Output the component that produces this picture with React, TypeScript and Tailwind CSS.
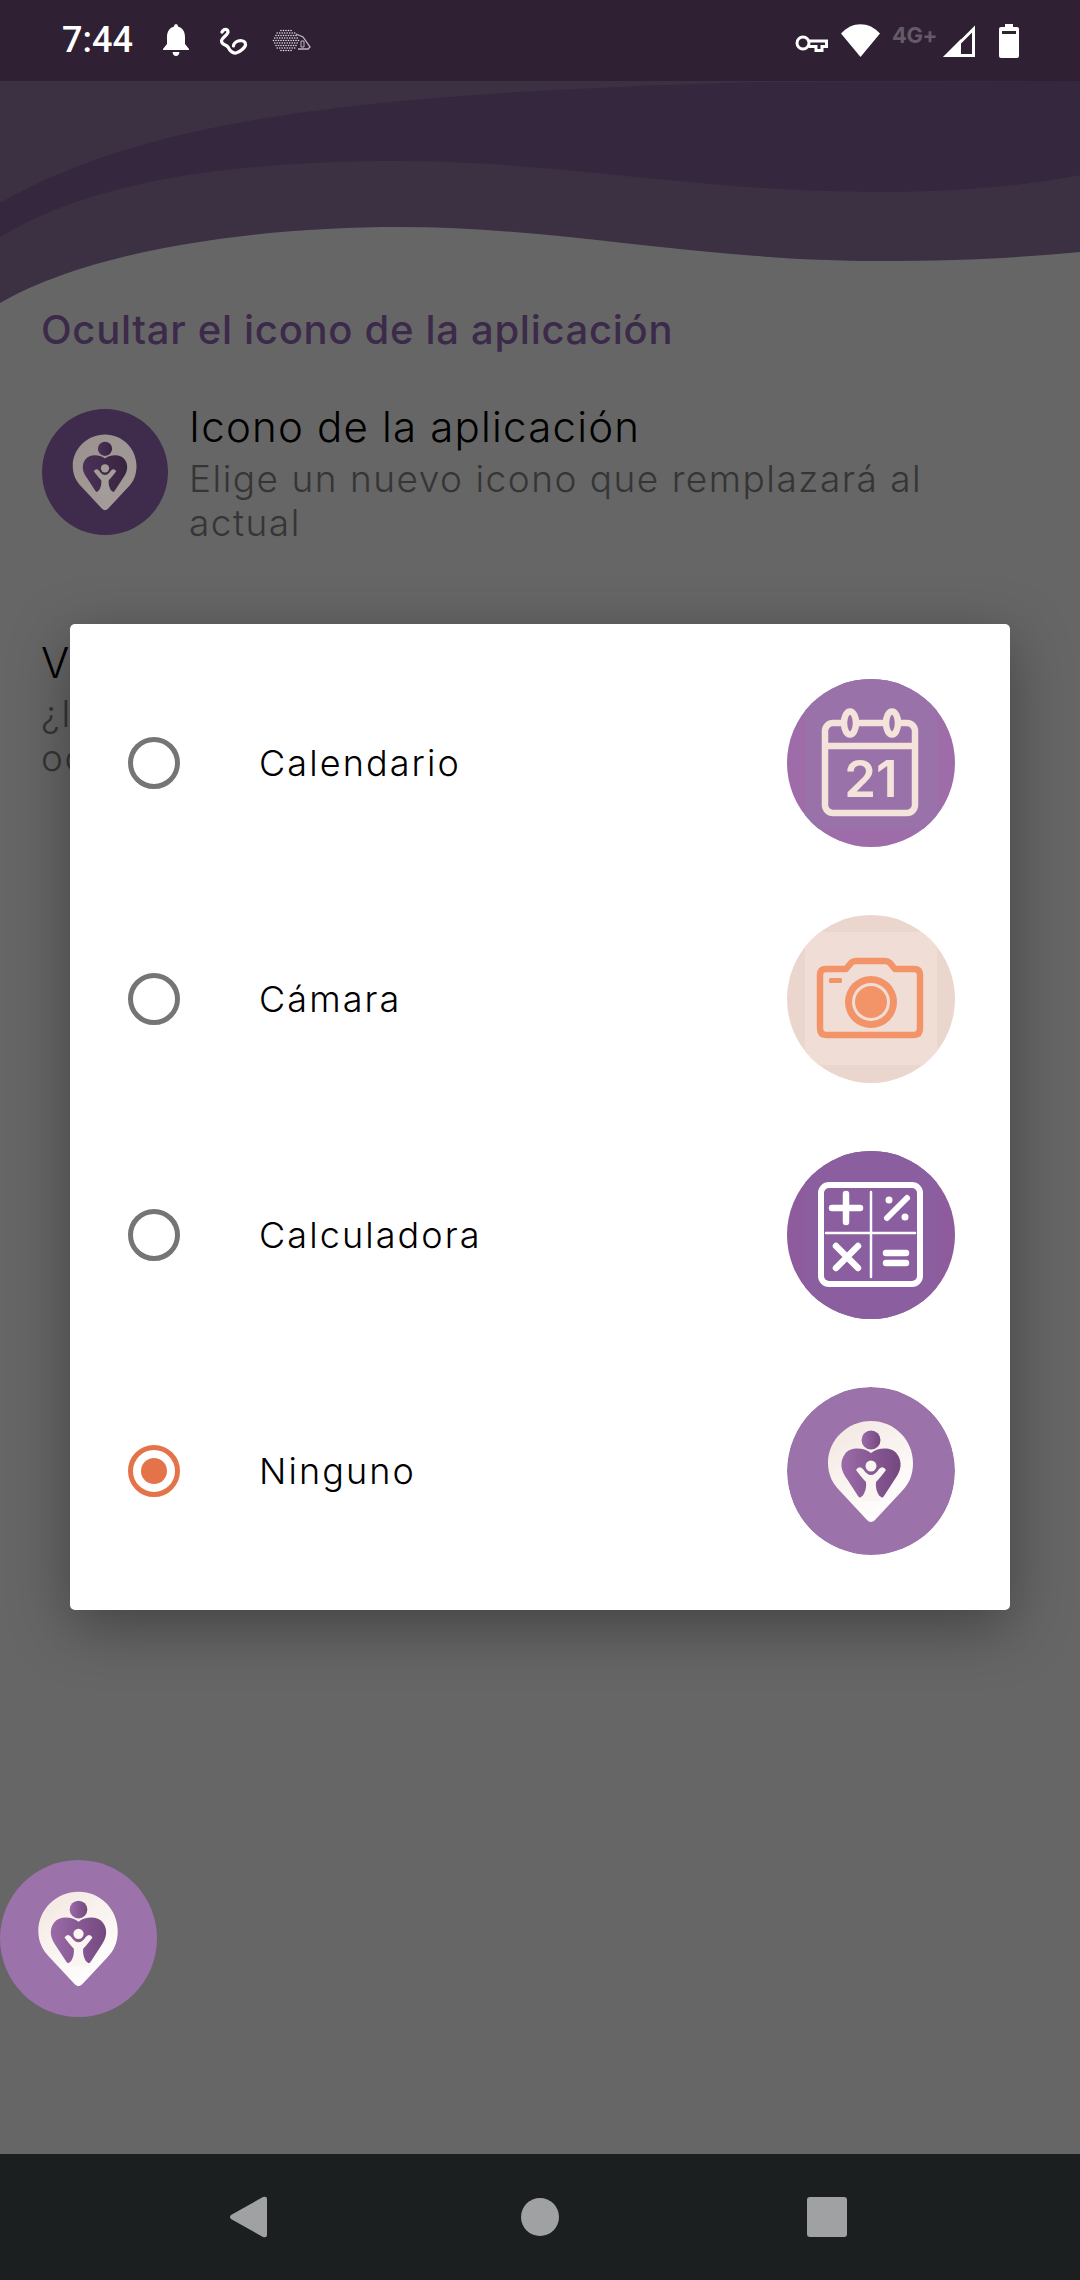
import { useId } from 'react'

function LogoMark({ bg, pinFrom, pinTo, heartFrom, heartTo, bodyColor }: { bg: string; pinFrom: string; pinTo: string; heartFrom: string; heartTo: string; bodyColor: string }) {
  const id = useId()
  return (
    <svg viewBox="0 0 168 168" className="block w-full h-full">
      <defs>
        <linearGradient id={id + 'pin'} x1="0" y1="0" x2="0.6" y2="1">
          <stop offset="0" stopColor={pinFrom} />
          <stop offset="1" stopColor={pinTo} />
        </linearGradient>
        <linearGradient id={id + 'heart'} x1="0" y1="0" x2="1" y2="0">
          <stop offset="0" stopColor={heartFrom} />
          <stop offset="1" stopColor={heartTo} />
        </linearGradient>
      </defs>
      <circle cx="84" cy="84" r="84" fill={bg} />
      <path d="M84 34C60.500 34 41 53 41 76C41 88 46 97 53 104L80 133C82.500 135.500 85.500 135.500 88 133L115 104C122 97 126 88 126 76C126 53 107.500 34 84 34Z" fill={`url(#${id}pin)`} />
      <circle cx="84" cy="53" r="9.500" fill={`url(#${id}heart)`} />
      <path d="M84 66C76 60 63 60 58 67C52 75 54 84 60 92L71 109Q73 112 75 109L93 109Q95 112 97 109L108 92C114 84 116 75 110 67C105 60 92 60 84 66Z" fill={`url(#${id}heart)`} />
      <path d="M69 83Q72 78 76 82Q80 88 84 88Q88 88 92 82Q96 78 99 83Q93 91 89 95Q88 103 93 110L93 114L75 114L75 110Q80 103 79 95Q75 91 69 83Z" fill={bodyColor} />
      <circle cx="84" cy="79" r="5.500" fill={bodyColor} />
    </svg>
  )
}

function PurpleLogo() {
  return <LogoMark bg="#9b72aa" pinFrom="#f3e6df" pinTo="#ffffff" heartFrom="#9a6ba8" heartTo="#74487f" bodyColor="#fbf5f2" />
}

function CalendarIcon() {
  return (
    <svg viewBox="0 0 168 168" className="block w-full h-full">
      <rect width="168" height="168" fill="#9d6ca9" />
      <rect x="18" y="0" width="132" height="150" fill="#9972a9" />
      <g fill="none" stroke="#f3e3da" strokeWidth="6.500">
        <rect x="38" y="44" width="90" height="90" rx="8" />
        <path d="M38 67H128" />
        <ellipse cx="63" cy="44" rx="6" ry="11.500" fill="#9972a9" />
        <ellipse cx="105" cy="44" rx="6" ry="11.500" fill="#9972a9" />
      </g>
      <text x="84" y="118" textAnchor="middle" fill="#f3e3da" className="font-['Inter',sans-serif] font-semibold text-[51px]">21</text>
    </svg>
  )
}

function CameraIcon() {
  return (
    <svg viewBox="0 0 168 168" className="block w-full h-full">
      <rect width="168" height="168" fill="#ebd6ce" />
      <rect x="18" y="17" width="132" height="133" fill="#f0ded6" />
      <path d="M39 54H59L64 48Q66 46 69 46H98Q101 46 103 48L108 54H127Q133 54 133 60V113Q133 120 127 120H39Q33 120 33 113V60Q33 54 39 54Z" fill="none" stroke="#f29468" strokeWidth="6.500" strokeLinejoin="round" />
      <rect x="42" y="63" width="13" height="5" rx="1.500" fill="#f29468" />
      <circle cx="84" cy="87" r="26" fill="#f29468" />
      <circle cx="84" cy="87" r="19" fill="#f0ded6" />
      <circle cx="84" cy="87" r="16" fill="#f29468" />
    </svg>
  )
}

function CalculatorIcon() {
  return (
    <svg viewBox="0 0 168 168" className="block w-full h-full">
      <rect width="168" height="168" fill="#8e5b9c" />
      <rect x="18" y="0" width="132" height="168" fill="#8b5e9f" />
      <g fill="none" stroke="#ffffff" strokeLinecap="round">
        <rect x="34" y="34" width="99" height="99" rx="8" strokeWidth="6" />
        <path d="M84 41V126M39 82H128" strokeWidth="2.500" />
        <path d="M45 57H73M59 43V71" strokeWidth="6.500" />
        <path d="M100 67L120 47" strokeWidth="6" />
        <path d="M49 95L71 117M71 95L49 117" strokeWidth="6.500" />
        <path d="M99 102H119M99 112H119" strokeWidth="6.500" />
      </g>
      <circle cx="102" cy="49" r="3.500" fill="#ffffff" />
      <circle cx="118" cy="66" r="3.500" fill="#ffffff" />
    </svg>
  )
}

function Hedgehog() {
  const dots: { x: number; y: number }[] = []
  for (let r = 0; r < 9; r++) {
    for (let c = 0; c < 12; c++) {
      const x = 1.500 + c * 2.500 + (r % 2) * 1.200
      const y = 1.500 + r * 2.500
      const dx = (x - 14) / 14
      const dy = (y - 11.500) / 11
      if (dx * dx + dy * dy < 1) dots.push({ x, y })
    }
  }
  return (
    <svg viewBox="0 0 39 23" className="w-[39px] h-[23px] opacity-85">
      {dots.map((d, i) => (
        <circle key={i} cx={d.x} cy={d.y} r="0.800" fill="#ffffff" />
      ))}
      <path d="M24 5L31 8L38 18L36 20H26" fill="none" stroke="#d9d4dc" strokeWidth="1.300" />
      <path d="M29 12H32V18H29Z" fill="none" stroke="#d9d4dc" strokeWidth="1" />
    </svg>
  )
}

function StatusBar() {
  return (
    <div className="h-[81px] bg-[#2f2033] flex items-center justify-between pl-[62px] pr-[61px] shrink-0">
      <div className="flex items-center">
        <span className="text-white text-[36px] leading-none font-medium font-['Roboto',sans-serif] -mt-[1px]">7:44</span>
        <svg viewBox="0 0 26 32" className="w-[26px] h-[32px] ml-[30px] -mt-[1px]" fill="#ffffff">
          <path d="M13 0Q15 0 15 2.500C20 4 22 8 22 13V20L26 25V26H0V25L4 20V13C4 8 6 4 11 2.500Q11 0 13 0Z" />
          <path d="M9.500 28H16.500Q16 32 13 32Q10 32 9.500 28Z" />
        </svg>
        <svg viewBox="0 0 29 29" className="w-[29px] h-[29px] ml-[30px]" fill="none" stroke="#ffffff" strokeWidth="3.200" strokeLinecap="round" strokeLinejoin="round">
          <path d="M3 6C5 2 9 3 9 6C9 9 3 11 2.500 15C2.500 19 7 18 9 21C11 25 13 27.500 17 27C21 26 27 21 26.500 18C26 14 20 14 17 16C15.500 17 14.500 19 14.500 20" />
        </svg>
        <div className="ml-[24px] flex"><Hedgehog /></div>
      </div>
      <div className="flex items-center">
        <svg viewBox="0 0 33 18" className="w-[33px] h-[18px] mt-[7px]" fill="none" stroke="#ffffff" strokeWidth="3">
          <circle cx="8" cy="8" r="6" />
          <path d="M14 6H31.500V11.500H27V15.500H21V11.500H14" />
        </svg>
        <svg viewBox="0 0 39 33" className="w-[39px] h-[33px] ml-[13px]" fill="#ffffff">
          <path d="M0 9.500C11 -3 28 -3 39 9.500L19.500 33Z" />
        </svg>
        <span className="ml-[12px] w-[44px] h-[33px] text-[#655a6a] text-[22px] leading-[22px] font-bold font-['Inter',sans-serif] tracking-[-0.5px]">4G+</span>
        <svg viewBox="0 0 32 32" className="w-[32px] h-[32px] ml-[7px]" fill="none">
          <path d="M30.500 4V30.500H4Z" stroke="#ffffff" strokeWidth="3" />
          <path d="M0 32L18 14V32Z" fill="#ffffff" />
        </svg>
        <svg viewBox="0 0 20 34" className="w-[20px] h-[34px] ml-[24px]" fill="#ffffff">
          <path d="M6 0H14V3H18Q20 3 20 5V32Q20 34 18 34H2Q0 34 0 32V5Q0 3 2 3H6Z" />
          <rect x="3" y="7" width="14" height="3" fill="#2f2033" />
        </svg>
      </div>
    </div>
  )
}

function HeaderWaves() {
  return (
    <svg viewBox="0 0 1080 222" className="block w-full h-[222px] shrink-0">
      <rect width="1080" height="222" fill="#3c3043" />
      <path d="M0 122C160 30 400 12 757 1L1080 0V222H0Z" fill="#35273d" />
      <path d="M0 156C100 95 250 80 400 80C560 80 700 111 881 111C960 111 1030 104 1080 94V222H0Z" fill="#3c3043" />
      <path d="M0 222C90 170 250 146 400 146C560 146 700 180 881 180C960 180 1030 176 1080 171V222Z" fill="#666666" />
    </svg>
  )
}

function BackgroundContent() {
  return (
    <div className="flex-1 bg-[#666666] pl-[41px] font-['Inter',sans-serif]">
      <h2 className="text-[#3c2a4a] text-[40px] leading-[46px] font-medium tracking-[0.7px] mt-[4px]">Ocultar el icono de la aplicación</h2>
      <div className="flex mt-[54px]">
        <div className="w-[126px] h-[126px] shrink-0 ml-[1px] mt-[2px]">
          <LogoMark bg="#3f2b4b" pinFrom="#9a918d" pinTo="#a39c99" heartFrom="#4a3157" heartTo="#38243f" bodyColor="#a39c99" />
        </div>
        <div className="ml-[21px] w-[760px]">
          <div className="text-black text-[42px] leading-[44px] font-light tracking-[1.2px] -mt-[2px]">Icono de la aplicación</div>
          <div className="text-[#353535] text-[37px] leading-[44px] font-light tracking-[1.5px] mt-[8px]">Elige un nuevo icono que remplazará al actual</div>
        </div>
      </div>
      <div className="text-black text-[42px] leading-[44px] font-light mt-[96px]">V</div>
      <div className="text-[#353535] text-[37px] leading-[44px] font-light tracking-[1.5px] mt-[7px]">¿I</div>
      <div className="text-[#353535] text-[37px] leading-[44px] font-light tracking-[1.5px]">oc</div>
    </div>
  )
}

const options = [
  { label: 'Calendario', icon: <CalendarIcon />, selected: false },
  { label: 'Cámara', icon: <CameraIcon />, selected: false },
  { label: 'Calculadora', icon: <CalculatorIcon />, selected: false },
  { label: 'Ninguno', icon: <PurpleLogo />, selected: true },
]

function IconDialog() {
  return (
    <div className="absolute left-[70px] top-[624px] w-[940px] bg-white rounded-[5px] py-[21px] shadow-[0_16px_60px_rgba(0,0,0,0.35)] font-['Inter',sans-serif]">
      {options.map((o) => (
        <div key={o.label} className="h-[236px] flex items-center pl-[58px] pr-[55px]">
          {o.selected ? (
            <div className="w-[52px] h-[52px] rounded-full border-[5px] border-[#e5734a] flex items-center justify-center shrink-0">
              <div className="w-[26px] h-[26px] rounded-full bg-[#e5734a]" />
            </div>
          ) : (
            <div className="w-[52px] h-[52px] rounded-full border-[5px] border-[#757575] shrink-0" />
          )}
          <span className="ml-[79px] flex-1 text-black text-[36px] font-light tracking-[2.1px]">{o.label}</span>
          <div className="w-[168px] h-[168px] shrink-0 rounded-full overflow-hidden">{o.icon}</div>
        </div>
      ))}
    </div>
  )
}

function NavBar() {
  return (
    <div className="h-[126px] bg-[#1b1f20] relative flex items-start shrink-0">
      <div className="w-full flex items-center pt-[42px] pl-[230px]">
        <svg viewBox="0 0 37 42" className="w-[37px] h-[42px]" fill="#a0a1a3">
          <path d="M1 19L33 1Q37 0 37 3V39Q37 42 33 41L1 23Q-1 21 1 19Z" />
        </svg>
        <div className="w-[38px] h-[38px] rounded-full bg-[#a0a1a3] ml-[254px]" />
        <div className="w-[40px] h-[40px] rounded-[3px] bg-[#a0a1a3] ml-[248px]" />
      </div>
    </div>
  )
}

export default function App() {
  return (
    <div className="relative w-[1080px] h-[2280px] flex flex-col overflow-hidden bg-[#666666]">
      <StatusBar />
      <HeaderWaves />
      <BackgroundContent />
      <NavBar />
      <IconDialog />
      <div className="absolute left-0 top-[1860px] w-[157px] h-[157px]">
        <PurpleLogo />
      </div>
    </div>
  )
}
